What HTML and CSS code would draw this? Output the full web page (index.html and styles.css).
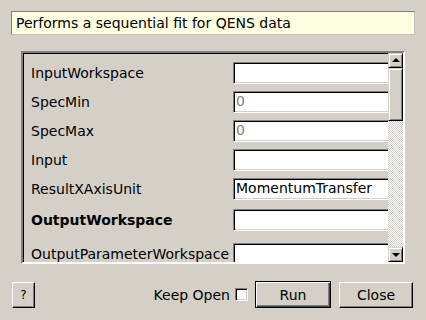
FILE: index.html
```html
<!DOCTYPE html>
<html lang="en">
<head>
    <meta charset="utf-8">
    <title>Sequential Fit</title>
    <link rel="stylesheet" href="styles.css">
</head>
<body>
    <div class="dialog">
        <div class="desc">Performs a sequential fit for QENS data</div>

        <div class="frame">
            <div class="props">
                <div class="row">
                    <span class="label">InputWorkspace</span>
                    <span class="field"></span>
                </div>
                <div class="row">
                    <span class="label">SpecMin</span>
                    <span class="field field--disabled">0</span>
                </div>
                <div class="row">
                    <span class="label">SpecMax</span>
                    <span class="field field--disabled">0</span>
                </div>
                <div class="row">
                    <span class="label">Input</span>
                    <span class="field"></span>
                </div>
                <div class="row">
                    <span class="label">ResultXAxisUnit</span>
                    <span class="field">MomentumTransfer</span>
                </div>
                <div class="row row--bold">
                    <span class="label">OutputWorkspace</span>
                    <span class="field"></span>
                </div>
                <div class="row row--last">
                    <span class="label">OutputParameterWorkspace</span>
                    <span class="field"></span>
                </div>
            </div>

            <div class="scrollbar">
                <div class="sb-btn"><span class="arrow arrow--up"></span></div>
                <div class="sb-thumb"></div>
                <div class="sb-track"></div>
                <div class="sb-btn"><span class="arrow arrow--down"></span></div>
            </div>
        </div>

        <div class="footer">
            <button class="btn btn--help">?</button>
            <div class="actions">
                <label class="keep">Keep Open <span class="check"></span></label>
                <button class="btn btn--default">Run</button>
                <button class="btn btn--close">Close</button>
            </div>
        </div>
    </div>
</body>
</html>
```

FILE: styles.css
```css
:root {
    --ff: 'DejaVu Sans', sans-serif;
    --bg: #d4d0c8;
    --shadow: #808080;
    --dark: #404040;
}

body {
    font-family: var(--ff);
    font-size: 14px;
    color: #000;
    background: var(--bg);

    margin: 0;
}

.dialog {
    width: 426px;
    height: 320px;
    overflow: hidden;
}

.desc {
    margin: 11px 11px 0 11px;
    height: 22px;
    line-height: 22px;
    padding-left: 4px;

    background: #ffffe1;
    border: 1px solid #c0c0c0;
    border-top-color: #808080;
    border-left-color: #808080;
}

/* sunken scroll area */
.frame {
    margin: 16px 21px 0 21px;
    height: 209px;

    border: 2px solid;
    border-color: var(--shadow) #fff #fff var(--shadow);
    box-shadow: inset 1px 1px 0 #000;

    display: flex;
}

.props {
    flex: 1;
    overflow: hidden;
    padding: 9px 0 0 8px;

    display: flex;
    flex-direction: column;
    gap: 7px;
}

.row {
    height: 22px;

    display: flex;
    align-items: center;
}
.row--bold {
    font-weight: bold;
    margin-top: 2px;
}
.row--last {
    margin-top: 5px;
}
.row .label {
    width: 202px;
    flex: none;
    white-space: nowrap;
}
.row .field {
    flex: none;
    box-sizing: border-box;
    width: 160px;
    height: 22px;
    line-height: 19px;
    padding-left: 2px;

    font-weight: normal;
    background: #fff;
    border: 1px solid;
    border-color: var(--shadow) #fff #fff var(--shadow);
    box-shadow: inset 1px 1px 0 #000, inset -1px -1px 0 var(--bg);
}
.row .field--disabled {
    color: #808080;
}

.scrollbar {
    width: 15px;
    flex: none;

    display: flex;
    flex-direction: column;
}
.sb-btn,
.sb-thumb {
    box-sizing: border-box;
    background: var(--bg);
    border: 1px solid;
    border-color: var(--bg) #000 #000 var(--bg);
    box-shadow: inset 1px 1px 0 #fff, inset -1px -1px 0 var(--shadow);
}
.sb-btn {
    height: 15px;
    flex: none;

    display: flex;
    justify-content: center;
    align-items: center;
}
.sb-thumb {
    height: 53px;
    flex: none;
}
.sb-track {
    flex: 1;
    background-color: #fff;
    background-image: conic-gradient(var(--bg) 25%, #fff 0 50%, var(--bg) 0 75%, #fff 0);
    background-size: 2px 2px;
}

.arrow {
    width: 0;
    height: 0;
    border-left: 4px solid transparent;
    border-right: 4px solid transparent;
}
.arrow--up {
    border-bottom: 4px solid #000;
    margin-top: -1px;
}
.arrow--down {
    border-top: 4px solid #000;
}

.footer {
    margin-top: 17px;
    padding: 0 13px 0 12px;

    display: flex;
    align-items: center;
}

.actions {
    margin-left: auto;

    display: flex;
    align-items: center;
}

.keep {
    display: flex;
    align-items: center;
    gap: 5px;
    margin-right: 7px;
}
.check {
    box-sizing: border-box;
    width: 13px;
    height: 13px;
    background: #fff;
    border: 1px solid;
    border-color: var(--shadow) #fff #fff var(--shadow);
    box-shadow: inset 1px 1px 0 #000, inset -1px -1px 0 var(--bg);
}

.btn {
    font-family: var(--ff);
    font-size: 14px;
    color: #000;
    box-sizing: border-box;
    padding: 0;
    height: 26px;

    background: var(--bg);
    border: 1px solid;
    border-color: #fff #000 #000 #fff;
    box-shadow: inset -1px -1px 0 var(--shadow);
}
.btn--help {
    width: 23px;
    font-size: 12px;
}
.btn--default {
    width: 76px;
    height: 27px;
    border: 1px solid #000;
    box-shadow: inset 1px 1px 0 #fff, inset -1px -1px 0 var(--dark), inset -2px -2px 0 var(--shadow);
    margin-right: 8px;
}
.btn--close {
    width: 74px;
}
```
